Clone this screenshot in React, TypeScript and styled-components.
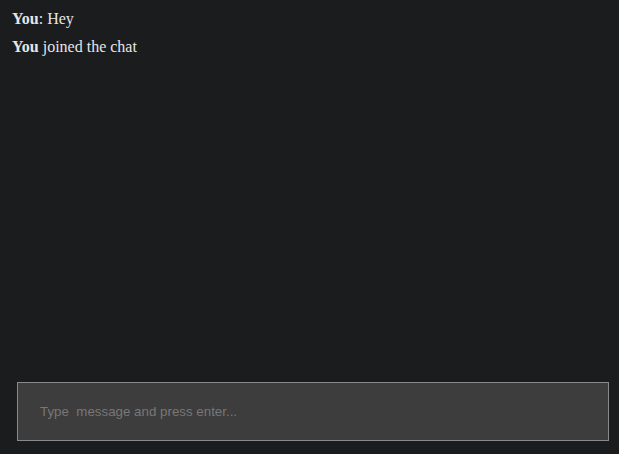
import React from "react";
import styled, { createGlobalStyle } from "styled-components";

const Global = createGlobalStyle`
  html, body { margin: 0; padding: 0; background: #1b1c1e; }
  #root { height: 100vh; }
`;

const Page = styled.div`
  display: flex;
  flex-direction: column;
  height: 100vh;
  background: #1b1c1e;
  box-sizing: border-box;
`;

const MessageList = styled.div`
  flex: 1;
  padding: 5px 12px;
  font-family: "Liberation Serif", "Times New Roman", serif;
  font-size: 16px;
  color: #e6e6e6;
`;

const Message = styled.div`
  line-height: 28px;
`;

const Name = styled.b`
  font-weight: bold;
`;

const Form = styled.form`
  display: flex;
  padding: 0 10px 13px 17px;
  margin: 0;
`;

const Input = styled.input`
  flex: 1;
  height: 59px;
  box-sizing: border-box;
  background: #3d3d3d;
  border: 1px solid #8a8a8a;
  border-radius: 0;
  padding: 0 22px;
  font-family: "Liberation Sans", Arial, sans-serif;
  font-size: 13.333px;
  color: #ddd;
  outline: none;
  &::placeholder {
    color: #777;
    white-space: pre;
  }
`;

export default function App() {
  return (
    <>
      <Global />
      <Page>
        <MessageList>
          <Message>
            <Name>You</Name>: Hey
          </Message>
          <Message>
            <Name>You</Name> joined the chat
          </Message>
        </MessageList>
        <Form onSubmit={(e) => e.preventDefault()}>
          <Input placeholder="Type  message and press enter..." />
        </Form>
      </Page>
    </>
  );
}
